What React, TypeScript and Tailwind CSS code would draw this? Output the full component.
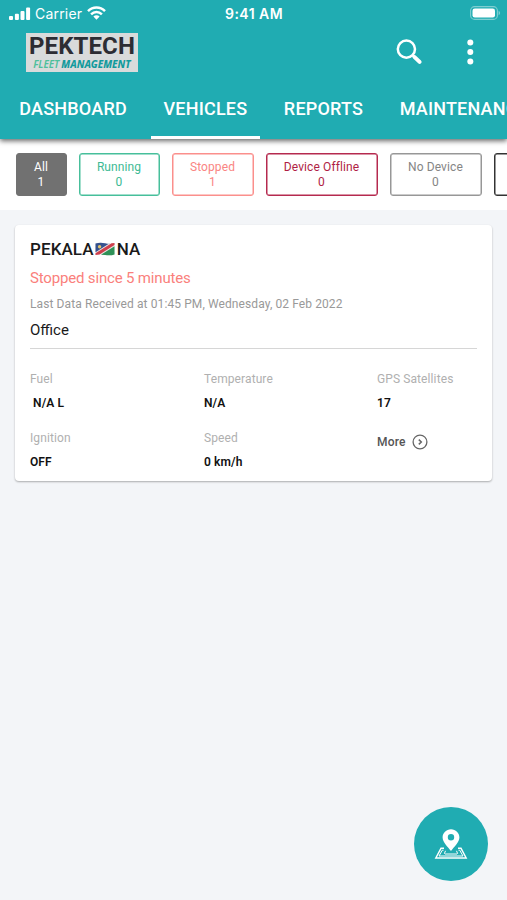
import React from "react";

const TABS = [
  { label: "DASHBOARD", active: false },
  { label: "VEHICLES", active: true },
  { label: "REPORTS", active: false },
  { label: "MAINTENANCE", active: false },
];

const FILTERS = [
  { label: "All", count: "1", style: "w-[51px] border-[#717171] bg-[#717171] text-white" },
  { label: "Running", count: "0", style: "w-[81px] border-[#47bf9b] shadow-[inset_0_0_0_0.5px_#47bf9b] text-[#3dba94]" },
  { label: "Stopped", count: "1", style: "w-[82px] border-[#fb8f8c] shadow-[inset_0_0_0_0.5px_#fb8f8c] text-[#fa8583]" },
  { label: "Device Offline", count: "0", style: "w-[112px] border-[#b52a4f] shadow-[inset_0_0_0_0.5px_#b52a4f] text-[#b01e45]" },
  { label: "No Device", count: "0", style: "w-[92px] border-[#979797] shadow-[inset_0_0_0_0.5px_#979797] text-[#858585]" },
  { label: "Inactive", count: "0", style: "w-[82px] border-[#333333] shadow-[inset_0_0_0_0.5px_#333333] text-[#333333]" },
];

function StatusBar() {
  return (
    <div className="grid h-[27px] grid-cols-3 items-center pr-[6px] pl-[9px]">
      <div className="flex items-center">
        <svg className="shrink-0" width="22" height="14" viewBox="0 0 22 14" fill="#fff">
          <rect x="0" y="9" width="4" height="4" rx="1" />
          <rect x="5.9" y="6.8" width="4" height="6.2" rx="1" />
          <rect x="11.5" y="4" width="4" height="9" rx="1" />
          <rect x="17.1" y="0.5" width="4" height="12.5" rx="1" />
        </svg>
        <span className="ml-[4px] w-[48px] font-[Inter] text-[14px] leading-[16px] tracking-[0.2px] whitespace-nowrap">Carrier</span>
        <svg className="-mt-[1px] ml-[4px] shrink-0" width="19" height="14" viewBox="0 0 19 14" fill="none" stroke="#fff" strokeWidth="2.5">
          <path d="M1 5.1C5.8.3 13.2.3 18 5.1" />
          <path d="M4.1 8.3c3.1-3 7.7-3 10.8 0" />
          <path d="M6.4 10.6a4.4 4.4 0 0 1 6.2 0L9.5 13.7Z" fill="#fff" stroke="none" />
        </svg>
      </div>
      <div className="pr-[2px] text-center font-[Inter] text-[14px] leading-[16px] font-semibold tracking-[0.45px] whitespace-nowrap">9:41 AM</div>
      <svg className="-mt-[1px] justify-self-end" width="31" height="14" viewBox="0 0 31 14">
        <rect x=".6" y=".6" width="26.8" height="12.8" rx="4" fill="none" stroke="#7fced1" strokeWidth="1.1" />
        <rect x="2.5" y="2.5" width="22.5" height="9" rx="2.3" fill="#fff" />
        <path d="M28.6 4.8c2 .9 2 3.5 0 4.4Z" fill="#7fced1" />
      </svg>
    </div>
  );
}

function Logo() {
  return (
    <div className="flex h-[39px] w-[112px] flex-col items-center bg-[#d9dbdb]">
      <span className="h-[25px] pt-[1px] text-[24px] leading-[24px] font-bold tracking-[0.1px] text-[#2d2d33]">PEKTECH</span>
      <div className="flex gap-[2px] font-['Noto_Sans',sans-serif] text-[10px] leading-[12px] font-extrabold whitespace-nowrap text-[#129a9d] italic">
        <span className="font-semibold text-[#4dbf9b]">FLEET</span>
        <span>MANAGEMENT</span>
      </div>
    </div>
  );
}

function NamibiaFlag() {
  return (
    <svg className="mx-[1.5px] shrink-0" width="20" height="14" viewBox="0 0 20 14">
      <path d="M.5 1.5Q5 0 10 1.2T19.5 1V12.5Q15 14 10 12.9T.5 13Z" fill="#e9e5e3" />
      <path d="M.5 1.5Q5 0 10 1.2T15 1L.5 10.2Z" fill="#35528f" />
      <path d="M19.5 4.2V12.5Q15 14 10 12.9L6 12.7Z" fill="#2f9157" />
      <path d="M.5 11.2 16.5 1.3 19.5 1V3L4.5 12.6.5 13Z" fill="#cf3f4c" />
      <circle cx="4.6" cy="4.8" r="1.7" fill="#e3c56a" />
    </svg>
  );
}

function Stat({ label, value }: { label: string; value: string }) {
  return (
    <div className="flex h-[58.5px] flex-col items-start">
      <span className="text-[12px] leading-[16px] tracking-[0.1px] text-[#b0b0b0]">{label}</span>
      <span className="mt-[8px] text-[12px] leading-[16px] font-semibold tracking-[0.1px] whitespace-pre text-[#111]">{value}</span>
    </div>
  );
}

export default function App() {
  return (
    <div className="relative h-[900px] w-[507px] overflow-hidden bg-[#f3f5f8] font-[Roboto,sans-serif]">
      <header className="relative h-[139px] bg-[#20acb2] text-white shadow-[0_2px_5px_rgba(0,0,0,0.6)]">
        <StatusBar />
        <div className="flex h-[53px] items-start pt-[6px] pl-[26px]">
          <Logo />
          <svg className="mt-[5px] ml-[258px]" width="27" height="28" viewBox="0 0 27 28" fill="none" stroke="#fff">
            <circle cx="10.4" cy="11.1" r="8.6" strokeWidth="2.5" />
            <path d="M16.8 17.5l1.8 1.8" strokeWidth="2.5" />
            <path d="M18.6 19.1l5 4.8" strokeWidth="4" strokeLinecap="round" />
          </svg>
          <svg className="mt-[6px] ml-[44px]" width="7" height="26" viewBox="0 0 7 26" fill="#fff">
            <circle cx="3.3" cy="3.4" r="3" />
            <circle cx="3.3" cy="12.9" r="3" />
            <circle cx="3.3" cy="22.4" r="3" />
          </svg>
        </div>
        <nav className="flex h-[59px] gap-[12px] pl-[7px]">
          {TABS.map((t) => (
            <div
              key={t.label}
              className={`flex shrink-0 items-center border-b-[3px] px-[12.3px] pt-[1px] text-[18px] font-medium tracking-[0.2px] whitespace-nowrap ${t.active ? "border-white" : "border-transparent"}`}
            >
              {t.label}
            </div>
          ))}
        </nav>
      </header>

      <div className="flex h-[71px] gap-[12px] bg-white pt-[14px] pl-[15.5px]">
        {FILTERS.map((f) => (
          <div
            key={f.label}
            className={`flex h-[42.5px] shrink-0 flex-col items-center rounded-[3px] border pt-[6px] text-[12px] leading-[15px] tracking-[0.1px] ${f.style}`}
          >
            <span>{f.label}</span>
            <span>{f.count}</span>
          </div>
        ))}
      </div>

      <main className="px-[15px] pt-[15px]">
        <section className="h-[256px] rounded-[4px] bg-white px-[15px] pt-[14px] shadow-[0_1px_2px_rgba(0,0,0,0.3)]">
          <h1 className="flex h-[20px] items-center text-[17px] leading-[20px] font-medium tracking-[0.1px] text-[#1a1a1a]">
            PEKALA
            <NamibiaFlag />
            NA
          </h1>
          <p className="mt-[10px] text-[15px] leading-[18px] tracking-[-0.17px] text-[#fa7f7c]">Stopped since 5 minutes</p>
          <p className="mt-[9px] text-[12px] leading-[16px] tracking-[0.1px] text-[#999]">
            Last Data Received at 01:45 PM, Wednesday, 02 Feb 2022
          </p>
          <p className="mt-[9px] text-[15px] leading-[18px] text-[#1a1a1a]">Office</p>
          <div className="mt-[9px] h-px bg-[#d6d6d6]" />
          <div className="mt-[22px] grid grid-cols-[174px_173px_1fr]">
            <Stat label="Fuel" value=" N/A L" />
            <Stat label="Temperature" value="N/A" />
            <Stat label="GPS Satellites" value="17" />
            <Stat label="Ignition" value="OFF" />
            <Stat label="Speed" value="0 km/h" />
            <div className="mt-[4.5px] flex h-[16px] items-center text-[12px] font-medium tracking-[0.2px] text-[#555]">
              More
              <svg className="ml-[6px]" width="16" height="16" viewBox="0 0 16 16" fill="none" stroke="#666" strokeWidth="1.3">
                <circle cx="8" cy="8" r="6.9" />
                <path d="M6.8 5.6 9.3 8l-2.5 2.4" strokeWidth="1.5" />
              </svg>
            </div>
          </div>
        </section>
      </main>

      <button className="absolute top-[807px] left-[414px] flex h-[74px] w-[74px] items-center justify-center rounded-full bg-[#20acb2]">
        <svg width="34" height="32" viewBox="0 0 34 32" fill="none" stroke="#fff">
          <path d="M10 20.3H7L1.8 30h30.4L27 20.3h-3" strokeWidth="1.4" />
          <path d="M9.5 22.2H8.3L5 28h24l-3.3-5.8h-1.2" strokeWidth="1" />
          <path d="M11 26h12M11.5 22.8l-1.2 3M22.5 22.8l1.2 3" strokeWidth="1" />
          <path fillRule="evenodd" d="M17 1.2c-4.7 0-8.4 3.7-8.4 8.2 0 5 5.3 9.2 8.4 13.6 3-4.4 8.4-8.6 8.4-13.6 0-4.5-3.7-8.2-8.4-8.2Zm0 4.9a3.2 3.2 0 1 1 0 6.4 3.2 3.2 0 0 1 0-6.4Z" fill="#fff" stroke="none" />
        </svg>
      </button>
    </div>
  );
}
